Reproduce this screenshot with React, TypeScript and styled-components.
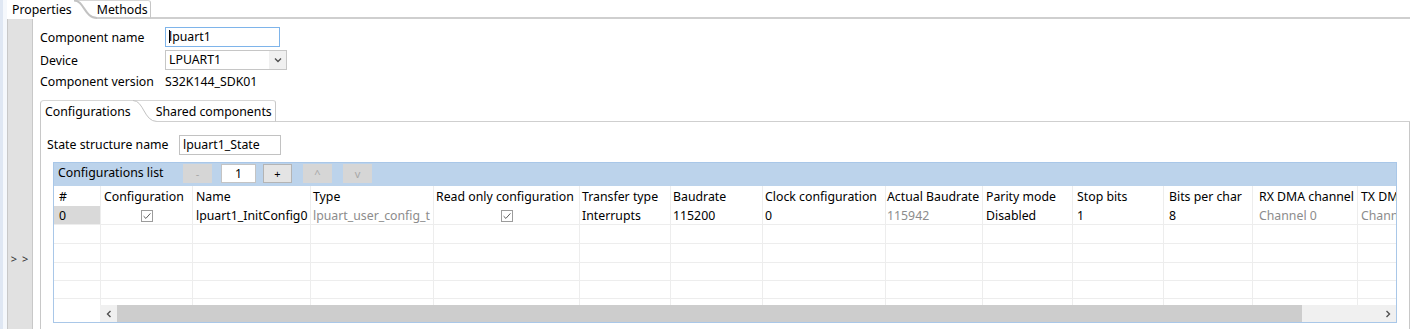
import React from "react";
import styled, { createGlobalStyle } from "styled-components";

const GlobalStyle = createGlobalStyle`
  html, body { margin: 0; padding: 0; background: #ffffff; }
  * { box-sizing: border-box; }
`;

const Root = styled.div`
  width: 1410px;
  height: 329px;
  overflow: hidden;
  display: flex;
  flex-direction: column;
  background: #ffffff;
  font-family: "Noto Sans", "Open Sans", sans-serif;
  font-size: 12.3px;
  color: #000000;
`;

/* ---------- top tab folder ---------- */
const TopTabBar = styled.div`
  display: flex;
  height: 19px;
  flex: none;
`;

const EdgeStrip = styled.div`
  width: 7px;
  flex: none;
  background: linear-gradient(to right, #dfe7f3 0 3px, #f5f8fc 3px 7px);
`;

const ActiveTopTab = styled.div`
  display: flex;
  align-items: center;
  padding: 0 2px 0 5px;
  background: #ffffff;
  white-space: nowrap;
`;

const PlainTopTab = styled.div`
  display: flex;
  align-items: center;
  padding: 1px 2px 0 0;
  background: #ffffff;
  border-top: 1px solid #d6d6d6;
  border-right: 1px solid #c6c6c6;
  border-top-right-radius: 3px;
  border-bottom: 2px solid #cfcfcf;
  white-space: nowrap;
`;

const TopFill = styled.div`
  flex: 1;
  border-bottom: 2px solid #cfcfcf;
`;

const CurveSvg = styled.svg`
  display: block;
  flex: none;
`;

const TabCurve = ({ w, h, line }: { w: number; h: number; line: number }) => (
  <CurveSvg width={w} height={h} viewBox={`0 0 ${w} ${h}`}>
    <path d={`M0 0.5 L${w} 0.5`} stroke="#d6d6d6" strokeWidth="1" fill="none" />
    <path
      d={`M0 0.5 C ${w * 0.45} 0.5, ${w * 0.45} ${h - line / 2}, ${w} ${h - line / 2}`}
      stroke="#c2c2c2"
      strokeWidth={line}
      fill="none"
    />
  </CurveSvg>
);

/* ---------- body ---------- */
const Body = styled.div`
  flex: 1;
  display: flex;
  min-height: 0;
`;

const SideBar = styled.div`
  width: 26px;
  flex: none;
  background: #e1e1e1;
  border-left: 1px solid #c8c8c8;
  border-right: 1px solid #c8c8c8;
  display: flex;
  justify-content: center;
  align-items: flex-start;
  padding-top: 232px;
  font-size: 11px;
  color: #303030;
  letter-spacing: 1px;
`;

const Content = styled.div`
  flex: 1;
  min-width: 0;
  display: flex;
  flex-direction: column;
  padding: 8px 0 0 7px;
`;

const PropGrid = styled.div`
  display: grid;
  grid-template-columns: 125px auto;
  grid-template-rows: 20px 20px 17px;
  row-gap: 3px;
  align-items: center;
`;

const Label = styled.div<{ $shift?: number }>`
  white-space: nowrap;
  line-height: 18px;
  padding-top: ${(p) => p.$shift ?? 0}px;
`;

const TextBox = styled.div<{ $w: number; $focus?: boolean }>`
  width: ${(p) => p.$w}px;
  height: 20px;
  border: 1px solid ${(p) => (p.$focus ? "#7eb4ea" : "#c2c2c2")};
  background: #ffffff;
  padding: 0 3px;
  line-height: 18px;
  white-space: nowrap;
  overflow: hidden;
`;

const Caret = styled.span`
  display: inline-block;
  width: 1px;
  height: 13px;
  background: #000000;
  vertical-align: -2px;
  margin-right: -1px;
`;

const ComboBox = styled.div`
  width: 122px;
  height: 20px;
  border: 1px solid #c6c6c6;
  display: flex;
  background: #ffffff;
`;

const ComboText = styled.div`
  flex: 1;
  padding: 0 3px;
  line-height: 18px;
`;

const ComboButton = styled.div`
  width: 17px;
  background: #f0f0f0;
  display: flex;
  align-items: center;
  justify-content: center;
`;

/* ---------- inner tab folder ---------- */
const InnerFolder = styled.div`
  margin-top: 10px;
  flex: 1;
  display: flex;
  flex-direction: column;
  min-height: 0;
`;

const InnerTabBar = styled.div`
  display: flex;
  height: 22px;
  flex: none;
`;

const ActiveInnerTab = styled.div`
  display: flex;
  align-items: center;
  padding: 0 2px 1px 4px;
  border-left: 1px solid #c8c8c8;
  border-top: 1px solid #d6d6d6;
  border-top-left-radius: 4px;
  background: #ffffff;
  white-space: nowrap;
`;

const PlainInnerTab = styled.div`
  display: flex;
  align-items: center;
  padding: 1px 3px 0 0;
  margin-left: -1px;
  border-top: 1px solid #d6d6d6;
  border-right: 1px solid #c8c8c8;
  border-top-right-radius: 3px;
  border-bottom: 1px solid #cfcfcf;
  white-space: nowrap;
`;

const InnerFill = styled.div`
  flex: 1;
  border-bottom: 1px solid #cfcfcf;
`;

const InnerPanel = styled.div`
  flex: 1;
  min-height: 0;
  border-left: 1px solid #c8c8c8;
  border-right: 1px solid #c8c8c8;
  padding: 13px 12px 0 6px;
  display: flex;
  flex-direction: column;
`;

const StateRow = styled.div`
  display: grid;
  grid-template-columns: 132px auto;
  align-items: center;
  height: 20px;
`;

/* ---------- table ---------- */
const TableFrame = styled.div`
  margin: 7px 0 0 6px;
  height: 161px;
  border: 1px solid #a9c7e8;
  display: flex;
  flex-direction: column;
  overflow: hidden;
`;

const ListBar = styled.div`
  height: 23px;
  flex: none;
  background: #bcd3eb;
  display: flex;
  align-items: flex-start;
  padding: 1px 0 0 4px;
`;

const ListLabel = styled.div`
  width: 125px;
  line-height: 17px;
  white-space: nowrap;
`;

const ToolButton = styled.div<{ $enabled?: boolean; $ml: number }>`
  width: 29px;
  height: 19px;
  margin-left: ${(p) => p.$ml}px;
  background: ${(p) => (p.$enabled ? "#e4e4e4" : "#d6d6d6")};
  border: 1px solid ${(p) => (p.$enabled ? "#b4b4b4" : "#d6d6d6")};
  color: ${(p) => (p.$enabled ? "#000000" : "#a8a8a8")};
  display: flex;
  align-items: center;
  justify-content: center;
  font-size: 11px;
  line-height: 1;
`;

const CountBox = styled.div<{ $ml: number }>`
  width: 35px;
  height: 19px;
  margin-left: ${(p) => p.$ml}px;
  background: #ffffff;
  border: 1px solid #c4c4c4;
  text-align: center;
  line-height: 17px;
`;

const GridArea = styled.div`
  flex: 1;
  min-height: 0;
  overflow: hidden;
`;

const Row = styled.div<{ $h: number; $line?: boolean }>`
  display: flex;
  height: ${(p) => p.$h}px;
  width: max-content;
  border-bottom: ${(p) => (p.$line ? "1px solid #ededed" : "none")};
`;

const Cell = styled.div<{
  $w: number;
  $pad: number;
  $center?: boolean;
  $muted?: boolean;
  $shade?: boolean;
}>`
  width: ${(p) => p.$w}px;
  flex: none;
  border-right: 1px solid #ededed;
  padding-left: ${(p) => (p.$center ? 0 : p.$pad)}px;
  padding-top: 1px;
  display: flex;
  align-items: center;
  justify-content: ${(p) => (p.$center ? "center" : "flex-start")};
  white-space: nowrap;
  overflow: hidden;
  color: ${(p) => (p.$muted ? "#8c8c8c" : "#000000")};
  background: ${(p) => (p.$shade ? "#d9d9d9" : "transparent")};
`;

const ScrollRow = styled.div`
  height: 17px;
  flex: none;
  display: flex;
`;

const ScrollSpacer = styled.div`
  width: 46px;
  flex: none;
  background: #ffffff;
`;

const ScrollBar = styled.div`
  flex: 1;
  display: flex;
  background: #f0f0f0;
`;

const ScrollArrow = styled.div`
  width: 17px;
  flex: none;
  display: flex;
  align-items: center;
  justify-content: center;
  background: #f0f0f0;
`;

const ScrollThumb = styled.div`
  width: 1185px;
  flex: none;
  background: #cdcdcd;
`;

const ScrollTrack = styled.div`
  flex: 1;
`;

/* ---------- drawings ---------- */
const Check = () => (
  <svg width="12" height="12" viewBox="0 0 12 12">
    <rect x="0.5" y="0.5" width="11" height="11" fill="#ffffff" stroke="#9c9c9c" />
    <path d="M2.6 6.2 L4.9 8.4 L9.4 3.4" stroke="#5c5c5c" strokeWidth="1" fill="none" />
  </svg>
);

const Chevron = ({ dir }: { dir: "down" | "left" | "right" }) => {
  const d =
    dir === "down" ? "M1 1.5 L4 4.5 L7 1.5" : dir === "left" ? "M4.5 1 L1.5 4 L4.5 7" : "M1.5 1 L4.5 4 L1.5 7";
  const w = dir === "down" ? 8 : 6;
  const h = dir === "down" ? 6 : 8;
  return (
    <svg width={w} height={h} viewBox={`0 0 ${w} ${h}`}>
      <path d={d} stroke="#505050" strokeWidth="1.4" fill="none" />
    </svg>
  );
};

/* ---------- data ---------- */
type Col = { title: string; width: number; pad: number };
const COLS: Col[] = [
  { title: "#", width: 47, pad: 5 },
  { title: "Configuration", width: 92, pad: 3 },
  { title: "Name", width: 118, pad: 3 },
  { title: "Type", width: 123, pad: 2 },
  { title: "Read only configuration", width: 146, pad: 2 },
  { title: "Transfer type", width: 91, pad: 2 },
  { title: "Baudrate", width: 92, pad: 2 },
  { title: "Clock configuration", width: 123, pad: 2 },
  { title: "Actual Baudrate", width: 97, pad: 1 },
  { title: "Parity mode", width: 90, pad: 3 },
  { title: "Stop bits", width: 91, pad: 4 },
  { title: "Bits per char", width: 89, pad: 5 },
  { title: "RX DMA channel", width: 105, pad: 6 },
  { title: "TX DMA channel", width: 105, pad: 3 },
];

type Val = { text?: string; check?: boolean; muted?: boolean };
const ROW0: Val[] = [
  { text: "0" },
  { check: true },
  { text: "lpuart1_InitConfig0" },
  { text: "lpuart_user_config_t", muted: true },
  { check: true },
  { text: "Interrupts" },
  { text: "115200" },
  { text: "0" },
  { text: "115942", muted: true },
  { text: "Disabled" },
  { text: "1" },
  { text: "8" },
  { text: "Channel 0", muted: true },
  { text: "Channel 0", muted: true },
];

const EMPTY_HEIGHTS = [19, 19, 18, 18, 18, 18];

export default function App() {
  return (
    <Root>
      <GlobalStyle />
      <TopTabBar>
        <EdgeStrip />
        <ActiveTopTab>Properties</ActiveTopTab>
        <TabCurve w={23} h={19} line={2} />
        <PlainTopTab>Methods</PlainTopTab>
        <TopFill />
      </TopTabBar>
      <Body>
        <EdgeStrip />
        <SideBar>&gt; &gt;</SideBar>
        <Content>
          <PropGrid>
            <Label $shift={1}>Component name</Label>
            <TextBox $w={115} $focus>
              <Caret />
              lpuart1
            </TextBox>
            <Label $shift={1}>Device</Label>
            <ComboBox>
              <ComboText>LPUART1</ComboText>
              <ComboButton>
                <Chevron dir="down" />
              </ComboButton>
            </ComboBox>
            <Label>Component version</Label>
            <Label>S32K144_SDK01</Label>
          </PropGrid>

          <InnerFolder>
            <InnerTabBar>
              <ActiveInnerTab>Configurations</ActiveInnerTab>
              <TabCurve w={24} h={22} line={1} />
              <PlainInnerTab>Shared components</PlainInnerTab>
              <InnerFill />
            </InnerTabBar>
            <InnerPanel>
              <StateRow>
                <Label>State structure name</Label>
                <TextBox $w={102}>lpuart1_State</TextBox>
              </StateRow>
              <TableFrame>
                <ListBar>
                  <ListLabel>Configurations list</ListLabel>
                  <ToolButton $ml={0}>-</ToolButton>
                  <CountBox $ml={9}>1</CountBox>
                  <ToolButton $ml={7} $enabled>
                    +
                  </ToolButton>
                  <ToolButton $ml={11}>^</ToolButton>
                  <ToolButton $ml={11}>v</ToolButton>
                </ListBar>
                <GridArea>
                  <Row $h={20}>
                    {COLS.map((c) => (
                      <Cell key={c.title} $w={c.width} $pad={c.pad}>
                        {c.title}
                      </Cell>
                    ))}
                  </Row>
                  <Row $h={19} $line>
                    {COLS.map((c, i) => {
                      const v = ROW0[i];
                      return (
                        <Cell
                          key={c.title}
                          $w={c.width}
                          $pad={c.pad}
                          $center={v.check}
                          $muted={v.muted}
                          $shade={i === 0}
                        >
                          {v.check ? <Check /> : v.text}
                        </Cell>
                      );
                    })}
                  </Row>
                  {EMPTY_HEIGHTS.map((h, r) => (
                    <Row key={r} $h={h} $line>
                      {COLS.map((c) => (
                        <Cell key={c.title} $w={c.width} $pad={c.pad} />
                      ))}
                    </Row>
                  ))}
                </GridArea>
                <ScrollRow>
                  <ScrollSpacer />
                  <ScrollBar>
                    <ScrollArrow>
                      <Chevron dir="left" />
                    </ScrollArrow>
                    <ScrollThumb />
                    <ScrollTrack />
                    <ScrollArrow>
                      <Chevron dir="right" />
                    </ScrollArrow>
                  </ScrollBar>
                </ScrollRow>
              </TableFrame>
            </InnerPanel>
          </InnerFolder>
        </Content>
      </Body>
    </Root>
  );
}
